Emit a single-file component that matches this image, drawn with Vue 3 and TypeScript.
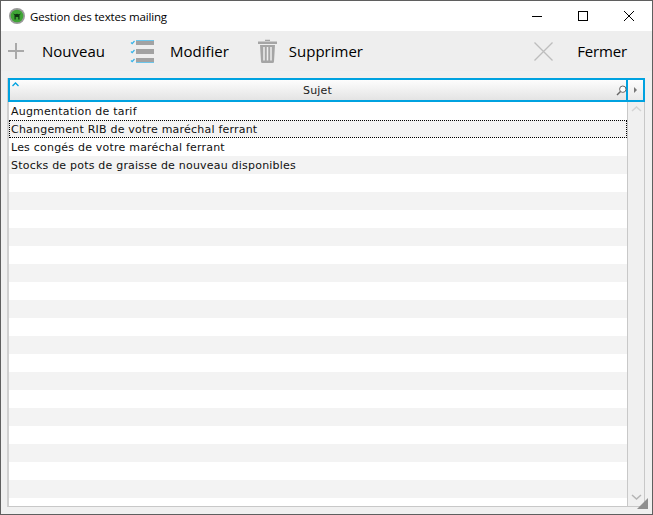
<script setup lang="ts">
const rows: string[] = [
  'Augmentation de tarif',
  'Changement RIB de votre maréchal ferrant',
  'Les congés de votre maréchal ferrant',
  'Stocks de pots de graisse de nouveau disponibles',
  ...Array(19).fill(''),
]
</script>

<template>
  <div class="window">
    <div class="titlebar">
      <svg class="appicon" width="16" height="16" viewBox="0 0 16 16">
        <circle cx="8" cy="8" r="8" fill="#9a9a9a" />
        <circle cx="8" cy="8" r="6.300" fill="#3fa535" />
        <path d="M4 5.500L5.500 7v4.500h1.200V9h2.600v2.500h1.200V7L12 5.500 9.800 6.300a3 3 0 0 0-3.600 0z" fill="#0f3512" />
      </svg>
      <span class="title">Gestion des textes mailing</span>
      <div class="winbtns">
        <span class="winbtn"><svg width="10" height="10" viewBox="0 0 10 10"><path d="M0 5.500h10" stroke="#000" fill="none" /></svg></span>
        <span class="winbtn"><svg width="10" height="10" viewBox="0 0 10 10"><rect x=".5" y=".5" width="9" height="9" stroke="#000" fill="none" /></svg></span>
        <span class="winbtn"><svg width="10" height="10" viewBox="0 0 10 10"><path d="M0 0l10 10M10 0L0 10" stroke="#000" fill="none" /></svg></span>
      </div>
    </div>

    <div class="toolbar">
      <button class="tool t-new">
        <svg width="16" height="16" viewBox="0 0 16 16"><path d="M8 0v16M0 8h16" stroke="#a9a9a9" stroke-width="2" fill="none" /></svg>
        <span>Nouveau</span>
      </button>
      <button class="tool t-edit">
        <svg width="25" height="24" viewBox="0 0 25 24">
          <rect x="6" y="1" width="18" height="1" fill="#6cc5ea" />
          <rect x="6" y="2" width="18" height="4" fill="#a2a2a2" />
          <rect x="6" y="10" width="18" height="5" fill="#a2a2a2" />
          <rect x="6" y="19" width="18" height="4" fill="#a2a2a2" />
          <rect x="6" y="23" width="18" height="1" fill="#6cc5ea" />
          <path d="M1 3.500l1.200 1.200L4.500 2M1 12.500l1.200 1.200L4.500 11M1 21.500l1.200 1.200L4.500 20" stroke="#35b4ea" stroke-width="1.200" fill="none" />
        </svg>
        <span>Modifier</span>
      </button>
      <button class="tool t-del">
        <svg width="19" height="24" viewBox="0 0 19 24">
          <path d="M7 2V.8h5V2zM0 2.500h19V5H0z" fill="#a5a5a5" />
          <path d="M2 6h15l-1 16.500a1.500 1.500 0 0 1-1.500 1.500h-10.500A1.500 1.500 0 0 1 3 22.500z" fill="#a5a5a5" />
          <path d="M6 8v13.500M9.500 8v13.500M13 8v13.500" stroke="#eee" stroke-width="1.500" fill="none" />
        </svg>
        <span>Supprimer</span>
      </button>
      <button class="tool t-close">
        <svg width="19" height="19" viewBox="0 0 19 19"><path d="M.5.500l18 18M18.500.500l-18 18" stroke="#bdbdbd" stroke-width="1.300" fill="none" /></svg>
        <span>Fermer</span>
      </button>
    </div>

    <div class="content">
      <div class="table">
        <div class="head">
          <div class="head-main">
            <svg class="sort" width="7" height="5" viewBox="0 0 7 5"><path d="M.5 4l3-3 3 3" stroke="#00a2e0" stroke-width="1.300" fill="none" /></svg>
            <span>Sujet</span>
            <svg class="loupe" width="11" height="11" viewBox="0 0 11 11">
              <circle cx="6.800" cy="4.200" r="3.200" stroke="#666" fill="#fff" />
              <path d="M4.500 6.500L1 10" stroke="#666" stroke-width="1.400" fill="none" />
            </svg>
          </div>
          <div class="head-side"><i class="arrow"></i></div>
        </div>
        <div class="body">
          <ul class="list">
            <li v-for="(r, i) in rows" :key="i" :class="{ odd: i % 2 === 1, focus: i === 1 }">{{ r }}</li>
          </ul>
          <div class="scroll">
            <svg class="up" width="11" height="6" viewBox="0 0 11 6"><path d="M1 5l4.500-4 4.500 4" stroke="#d4d4d4" stroke-width="1.500" fill="none" /></svg>
            <svg class="down" width="11" height="6" viewBox="0 0 11 6"><path d="M1 1l4.500 4 4.500-4" stroke="#b5b5b5" stroke-width="1.500" fill="none" /></svg>
          </div>
        </div>
      </div>
      <i class="grip"></i>
    </div>
  </div>
</template>

<style>
html, body { margin: 0; background: #f0f0f0; }
</style>

<style scoped>
.window {
  width: 653px; height: 515px; box-sizing: border-box;
  border: 1px solid #5f5f5f; background: #f0f0f0;
  display: flex; flex-direction: column; overflow: hidden;
  font-family: "Open Sans", "Noto Sans", sans-serif; color: #000;
}
.titlebar { height: 30px; flex: none; background: #fff; display: flex; align-items: center; padding-left: 8px; }
.appicon { flex: none; }
.title { margin-left: 5px; font-size: 11.500px; letter-spacing: -0.150px; flex: 1; }
.winbtns { display: flex; align-self: stretch; }
.winbtn { width: 46px; display: flex; align-items: center; justify-content: center; }
.toolbar { height: 40px; flex: none; background: #eeeeee; display: flex; align-items: center; padding-left: 7px; }
.tool { display: flex; align-items: center; border: 0; background: none; padding: 0; font: inherit; font-size: 15px; color: #000; }
.t-new span { margin-left: 18px; }
.t-edit { margin-left: 25px; }
.t-edit span { margin-left: 15px; }
.t-del { margin-left: 29px; }
.t-del span { margin-left: 12px; }
.t-close { margin-left: auto; margin-right: 25px; }
.t-close span { margin-left: 24px; letter-spacing: -0.150px; }
.content { flex: 1; padding: 7px; position: relative; min-height: 0; display: flex; }
.table { flex: 1; display: flex; flex-direction: column; min-height: 0; border: 1px solid #c8c8c8; border-top: 0; border-left-width: 2px; margin-left: -1px; border-left-color: #d0d0d0; }
.head { display: flex; height: 24px; flex: none; margin-left: -1px; margin-right: -1px; font-family: "DejaVu Sans", sans-serif; font-size: 11px; color: #222; }
.head-main { flex: 1; position: relative; box-sizing: border-box; border: 2px solid #00a2e0; background: linear-gradient(#fdfdfd, #e4e4e4); display: flex; align-items: center; justify-content: center; padding-right: 1px; letter-spacing: 0.150px; }
.head-side { width: 17px; box-sizing: border-box; border: 2px solid #00a2e0; border-left: 0; background: linear-gradient(#fdfdfd, #e9e9e9); display: flex; align-items: center; justify-content: center; }
.sort { position: absolute; left: 2px; top: 2px; }
.loupe { position: absolute; right: -1px; top: 5px; }
.arrow { width: 0; height: 0; border-left: 3px solid #777; border-top: 3px solid transparent; border-bottom: 3px solid transparent; }
.body { flex: 1; display: flex; min-height: 0; overflow: hidden; background: #fff; }
.list { flex: 1; margin: 0; padding: 0; list-style: none; overflow: hidden; font-family: "DejaVu Sans", sans-serif; font-size: 11px; letter-spacing: 0.210px; color: #111; min-width: 0; }
.list li { height: 18px; line-height: 19px; padding-left: 2px; box-sizing: border-box; background: #fff; white-space: nowrap; }
.list li.odd { background: #f3f3f3; }
.list li.focus { outline: 1px dotted #000; outline-offset: -1px; }
.scroll { width: 17px; flex: none; box-sizing: border-box; border-left: 1px solid #c8c8c8; background: #f0f0f0; position: relative; }
.up { position: absolute; left: 3px; top: 4px; }
.down { position: absolute; left: 3px; bottom: 6px; }
.grip { position: absolute; right: 4px; bottom: 5px; width: 0; height: 0; border-bottom: 11px solid #8f8f8f; border-left: 11px solid transparent; }
</style>
